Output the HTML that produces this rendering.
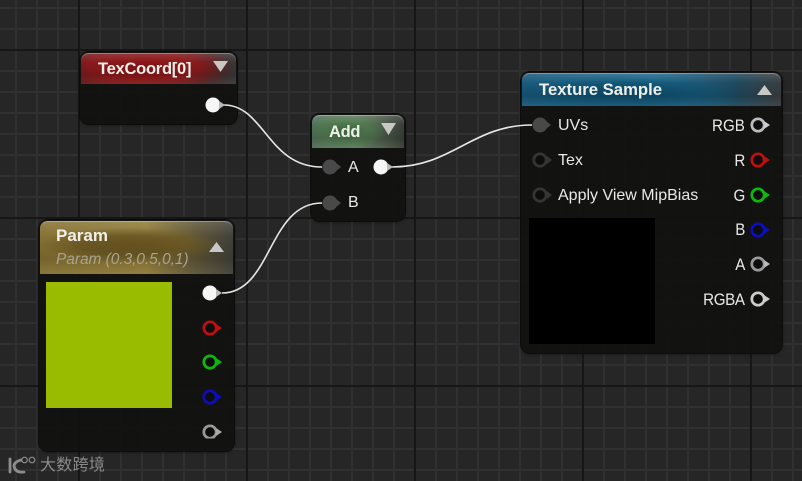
<!DOCTYPE html>
<html><head><meta charset="utf-8">
<style>
html,body{margin:0;padding:0;background:#262626}
#p{position:relative;width:802px;height:481px;overflow:hidden;background:#262626;font-family:"Liberation Sans",sans-serif;color:#e8e8e8}
.n{position:absolute;box-sizing:border-box;background:rgba(18,19,17,.96);border-radius:9px;box-shadow:0 0 0 1px #0c0c0c,0 1px 3px rgba(0,0,0,.55);overflow:hidden}
.h{position:absolute;left:1px;right:1px;top:1px;border-radius:8px 8px 0 0;box-shadow:inset 0 1px 0 rgba(255,255,255,.3)}
.g{position:absolute;left:0;right:0;top:0;bottom:0;background:linear-gradient(180deg,rgba(255,255,255,.14),rgba(255,255,255,0) 30%,rgba(0,0,0,.12) 70%,rgba(255,255,255,.04))}
.t{position:absolute;white-space:nowrap;font-size:16px;line-height:20px}
.b{font-weight:bold;color:#f0f0ea}
.r{transform:scaleX(.89);transform-origin:right center}
svg{position:absolute;left:0;top:0}
</style></head><body><div id="p">
<svg width="802" height="481" id="grid">
<g stroke="#303030" stroke-width="2" fill="none">
<path d="M16 0V481M37 0V481M58 0V481M100 0V481M121 0V481M142 0V481M163 0V481M184 0V481M205 0V481M226 0V481M268 0V481M289 0V481M310 0V481M331 0V481M352 0V481M373 0V481M394 0V481M436 0V481M457 0V481M478 0V481M499 0V481M520 0V481M541 0V481M562 0V481M604 0V481M625 0V481M646 0V481M667 0V481M688 0V481M709 0V481M730 0V481M772 0V481M793 0V481"/>
<path d="M0 8H802M0 29H802M0 71H802M0 92H802M0 113H802M0 134H802M0 155H802M0 176H802M0 197H802M0 239H802M0 260H802M0 281H802M0 302H802M0 323H802M0 344H802M0 365H802M0 407H802M0 428H802M0 449H802M0 470H802"/>
</g>
<g stroke="#161616" stroke-width="2" fill="none">
<path d="M79 0V481M247 0V481M415 0V481M583 0V481M751 0V481"/>
<path d="M0 50H802M0 218H802M0 386H802"/>
</g>
</svg>

<div class="n" style="left:80px;top:52px;width:157px;height:72px">
<div class="h" style="height:31px;background:radial-gradient(ellipse 90px 24px at 62px 14px,#8c1215 0,#8a1a1c 60%,transparent 100%),linear-gradient(90deg,#5e1a1a 0,#7a1e1f 40%,#4d2626 78%,#3a3838 100%)"><div class="g"></div></div>
</div>
<div class="n" style="left:311px;top:114px;width:94px;height:107px">
<div class="h" style="height:33px;background:radial-gradient(ellipse 40px 18px at 34px 16px,#3f6a3f 0,#4f784e 50%,transparent 100%),linear-gradient(90deg,#52705a 0,#5d7f5c 45%,#4b5a48 78%,#3a3f38 100%)"><div class="g"></div></div>
</div>
<div class="n" style="left:39px;top:220px;width:195px;height:231px">
<div class="h" style="height:53px;background:radial-gradient(ellipse 90px 18px at 90px 24px,#6a5420 0,#6e5a24 55%,transparent 100%),linear-gradient(90deg,#857132 0,#8f7a38 55%,#5f5536 80%,#414139 100%)"><div class="g"></div></div>
</div>
<div class="n" style="left:521px;top:72px;width:261px;height:281px">
<div class="h" style="height:33px;background:radial-gradient(ellipse 120px 20px at 100px 22px,#0e4d6c 0,#125575 55%,transparent 100%),linear-gradient(90deg,#1a5a7c 0,#1d6a90 50%,#1f4a60 82%,#3a3e40 100%)"><div class="g"></div></div>
</div>

<div style="position:absolute;left:46px;top:282px;width:126px;height:126px;background:#99bb00"></div>
<div style="position:absolute;left:529px;top:218px;width:126px;height:126px;background:#000"></div>

<div class="t b" style="left:98px;top:59px;font-size:16.500px;letter-spacing:-.25px">TexCoord[0]</div>
<div class="t b" style="left:329px;top:122px;font-size:16.500px;letter-spacing:-.3px">Add</div>
<div class="t b" style="left:56px;top:226px;font-size:17px">Param</div>
<div class="t" style="left:56px;top:250px;font-size:15.400px;font-style:italic;color:#a9a390">Param (0.3,0.5,0,1)</div>
<div class="t b" style="left:539px;top:80px;font-size:16.700px">Texture Sample</div>

<div class="t" style="left:348px;top:158px">A</div>
<div class="t" style="left:348px;top:193px">B</div>
<div class="t" style="left:558px;top:116px">UVs</div>
<div class="t" style="left:558px;top:151px">Tex</div>
<div class="t" style="left:558px;top:186px">Apply View MipBias</div>
<div class="t r" style="right:57px;top:116px;font-size:17px">RGB</div>
<div class="t r" style="right:57px;top:151px;font-size:17px">R</div>
<div class="t r" style="right:57px;top:186px;font-size:17px">G</div>
<div class="t r" style="right:57px;top:220px;font-size:17px">B</div>
<div class="t r" style="right:57px;top:255px;font-size:17px">A</div>
<div class="t r" style="right:57px;top:290px;font-size:17px;letter-spacing:-.4px">RGBA</div>

<svg width="802" height="481">
<g fill="none" stroke="#e6e6e6" stroke-width="1.600">
<path d="M224 105C264 105 268 167 322 167"/>
<path d="M222 293C272 293 268 203 322 203"/>
<path d="M392 167C452 167 472 125 532 125"/>
</g>
<g fill="#c8c8c4">
<path d="M213 61h15l-7.500 11z"/>
<path d="M381 123h15l-7.500 12z"/>
<path d="M209 252h15l-7.500 -10z"/>
<path d="M757 95h15l-7.500 -10z"/>
</g>
<g filter="url(#s)">
<g fill="#f6f6f6">
<circle cx="213" cy="105" r="7.500"/><path d="M219 101l6 4-6 4z" fill="#bbb"/>
<circle cx="381" cy="167" r="7.500"/><path d="M387 163l6 4-6 4z" fill="#bbb"/>
<circle cx="210" cy="293" r="7.500"/><path d="M216 289l6 4-6 4z" fill="#bbb"/>
</g>
<g fill="#4a4a4a">
<circle cx="330" cy="167" r="7.500"/><path d="M336 163l5 4-5 4z"/>
<circle cx="330" cy="203" r="7.500"/><path d="M336 199l5 4-5 4z"/>
<circle cx="540" cy="125" r="7.500"/><path d="M546 121l5 4-5 4z"/>
</g>
<g fill="#0e0e0e" stroke-width="2.700">
<circle cx="540" cy="160" r="6.200" stroke="#343434"/>
<circle cx="540" cy="195" r="6.200" stroke="#343434"/>
<circle cx="210" cy="328" r="6.200" stroke="#c01010"/>
<circle cx="210" cy="362" r="6.200" stroke="#10b810"/>
<circle cx="210" cy="397" r="6.200" stroke="#0a0ac0"/>
<circle cx="210" cy="432" r="6.200" stroke="#999"/>
<circle cx="758" cy="125" r="6.200" stroke="#bbb"/>
<circle cx="758" cy="160" r="6.200" stroke="#c01010"/>
<circle cx="758" cy="195" r="6.200" stroke="#10b810"/>
<circle cx="758" cy="230" r="6.200" stroke="#0a0ac0"/>
<circle cx="758" cy="264" r="6.200" stroke="#999"/>
<circle cx="758" cy="299" r="6.200" stroke="#ccc"/>
</g>
<path d="M547 156l5 4-5 4z" fill="#343434"/><path d="M547 191l5 4-5 4z" fill="#343434"/>
<path d="M216 324l6 4-6 4z" fill="#c01010"/><path d="M216 358l6 4-6 4z" fill="#10b810"/>
<path d="M216 393l6 4-6 4z" fill="#0a0ac0"/><path d="M216 428l6 4-6 4z" fill="#aaa"/>
<path d="M764 121l6 4-6 4z" fill="#ccc"/><path d="M764 156l6 4-6 4z" fill="#c01010"/>
<path d="M764 191l6 4-6 4z" fill="#10b810"/><path d="M764 226l6 4-6 4z" fill="#0a0ac0"/>
<path d="M764 260l6 4-6 4z" fill="#bbb"/><path d="M764 295l6 4-6 4z" fill="#ccc"/>
</g>
<defs><filter id="s" x="0" y="0" width="100%" height="100%"><feGaussianBlur stdDeviation=".35"/></filter></defs>
<g fill="none" stroke="#8c8c8c" stroke-linecap="round">
<path d="M10 459V472" stroke-width="2.800"/>
<path d="M21 460Q14 462 14 466Q15 473 24 472" stroke-width="2.800"/>
<circle cx="24.500" cy="460" r="2.800" stroke-width="1.200"/>
<circle cx="32" cy="460" r="2.800" stroke-width="1.200"/>
</g>
</svg>
<div class="t" style="left:40px;top:456px;font-size:16px;line-height:20px;letter-spacing:.3px;color:#8a8a8a;font-family:'Liberation Sans','Noto Sans CJK SC',sans-serif">大数跨境</div>
</div></body></html>
